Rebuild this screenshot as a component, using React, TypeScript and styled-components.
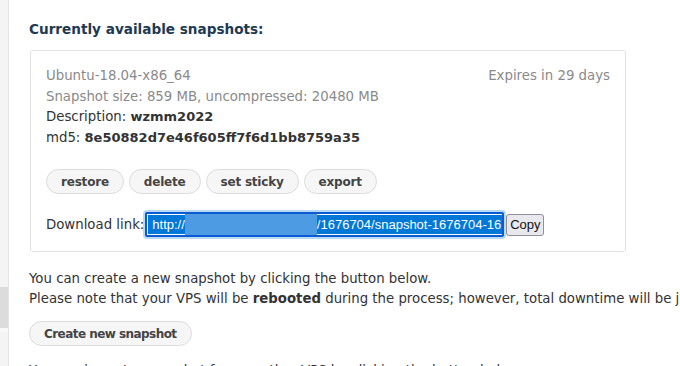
import React from "react";
import styled, { createGlobalStyle } from "styled-components";

const Global = createGlobalStyle`
  html, body { margin: 0; padding: 0; background: #fff; overflow: hidden; }
  body { font-family: "DejaVu Sans", Verdana, sans-serif; font-size: 13.3px; color: #333; }
`;

const Page = styled.div`
  display: flex;
  width: 1100px;
  height: 366px;
`;

const Sidebar = styled.div`
  width: 8px;
  flex: none;
  background: #f4f4f4;
  border-right: 1px solid #e4e4e4;
  display: flex;
  flex-direction: column;
`;

const SideItem = styled.div<{ $h: number; $bg: string }>`
  height: ${(p) => p.$h}px;
  background: ${(p) => p.$bg};
  flex: none;
`;

const Main = styled.div`
  padding: 19px 0 0 20px;
  display: flex;
  flex-direction: column;
  align-items: flex-start;
  & > * {
    flex-shrink: 0;
  }
`;

const Heading = styled.h2`
  margin: 0;
  font-size: 13.6px;
  line-height: 20px;
  font-weight: bold;
  color: #1e3a52;
`;

const Card = styled.div`
  margin: 11px 0 0 1px;
  width: 564px;
  border: 1px solid #e2e2e2;
  border-radius: 3px;
  padding: 15px 15px 14px 15px;
`;

const Row = styled.div`
  display: flex;
  justify-content: space-between;
`;

const Line = styled.div<{ $muted?: boolean }>`
  line-height: 20.5px;
  color: ${(p) => (p.$muted ? "#8a8a8a" : "#333")};
  white-space: nowrap;
  b {
    font-size: 13px;
  }
`;

const Buttons = styled.div`
  display: flex;
  gap: 5px;
  margin-top: 21px;
`;

const Pill = styled.button`
  height: 25px;
  padding: 0 14px;
  margin: 0;
  border: 1px solid #dcdcdc;
  border-radius: 13px;
  background: #f6f6f6;
  font-family: "DejaVu Sans", sans-serif;
  font-weight: bold;
  font-size: 12px;
  letter-spacing: -0.2px;
  color: #444;
  cursor: pointer;
`;

const LinkRow = styled.div`
  display: flex;
  align-items: center;
  margin-top: 18px;
`;

const Label = styled.span`
  color: #333;
  margin-right: 1px;
`;

const FakeInput = styled.div`
  width: 353px;
  height: 19px;
  border: 2px solid #0a5bd1;
  box-shadow: 0 0 0 2px #b9daf6;
  border-radius: 2px;
  padding: 1px;
  background: #fff;
  overflow: hidden;
  display: flex;
  align-items: stretch;
`;

const Selected = styled.span`
  background: #0078d7;
  color: #fff;
  font-family: "Liberation Sans", Arial, sans-serif;
  font-size: 13px;
  line-height: 19px;
  white-space: nowrap;
  padding-left: 4px;
  display: flex;
  align-items: center;
`;

const Redacted = styled.span`
  display: inline-block;
  width: 132px;
  height: 27px;
  background: #4d9be2;
  filter: blur(0.6px);
`;

const CopyBtn = styled.button`
  margin-left: 2px;
  height: 22px;
  width: 38px;
  padding: 0;
  border: 1px solid #8f8f9d;
  border-radius: 3px;
  background: #e9e9ed;
  font-family: "Liberation Sans", Arial, sans-serif;
  font-size: 13px;
  color: #111;
`;

const Para = styled.p`
  margin: 17px 0 0 0;
  line-height: 20px;
  white-space: nowrap;
  color: #333;
`;

const BigPill = styled(Pill)`
  margin-top: 12px;
  padding: 0 14px;
  font-size: 12px;
  letter-spacing: -0.55px;
`;

const Tail = styled(Para)`
  margin-top: 15px;
`;

export default function App() {
  return (
    <>
      <Global />
      <Page>
        <Sidebar>
          <SideItem $h={287} $bg="#f4f4f4" />
          <SideItem $h={41} $bg="#dcdcdc" />
          <SideItem $h={4} $bg="#f9f9f9" />
          <SideItem $h={34} $bg="#f4f4f4" />
        </Sidebar>
        <Main>
          <Heading>Currently available snapshots:</Heading>
          <Card>
            <Row>
              <Line $muted>Ubuntu-18.04-x86_64</Line>
              <Line $muted>Expires in 29 days</Line>
            </Row>
            <Line $muted>Snapshot size: 859 MB, uncompressed: 20480 MB</Line>
            <Line>
              Description: <b>wzmm2022</b>
            </Line>
            <Line>
              md5: <b>8e50882d7e46f605ff7f6d1bb8759a35</b>
            </Line>
            <Buttons>
              <Pill>restore</Pill>
              <Pill>delete</Pill>
              <Pill>set sticky</Pill>
              <Pill>export</Pill>
            </Buttons>
            <LinkRow>
              <Label>Download link:</Label>
              <FakeInput>
                <Selected>
                  http://
                  <Redacted />
                  /1676704/snapshot-1676704-1676704.tar.gz
                </Selected>
              </FakeInput>
              <CopyBtn>Copy</CopyBtn>
            </LinkRow>
          </Card>
          <Para>
            You can create a new snapshot by clicking the button below.
            <br />
            Please note that your VPS will be <b>rebooted</b> during the process; however, total downtime will be just a few minutes.
          </Para>
          <BigPill>Create new snapshot</BigPill>
          <Tail>You can import a snapshot from another VPS by clicking the button below.</Tail>
        </Main>
      </Page>
    </>
  );
}
